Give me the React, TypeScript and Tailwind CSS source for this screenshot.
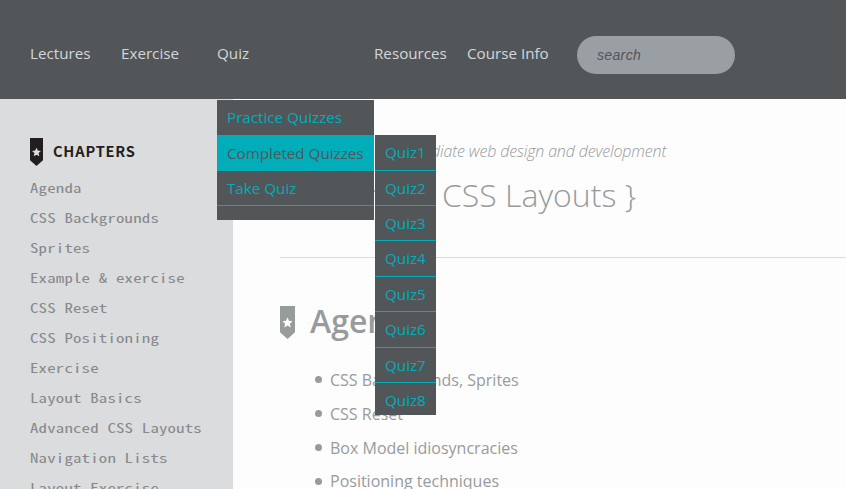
import React from "react";

const chapters = [
  "Agenda",
  "CSS Backgrounds",
  "Sprites",
  "Example & exercise",
  "CSS Reset",
  "CSS Positioning",
  "Exercise",
  "Layout Basics",
  "Advanced CSS Layouts",
  "Navigation Lists",
  "Layout Exercise",
];
const topics = ["CSS Backgrounds, Sprites", "CSS Reset", "Box Model idiosyncracies", "Positioning techniques"];
const quizzes = ["Quiz1", "Quiz2", "Quiz3", "Quiz4", "Quiz5", "Quiz6", "Quiz7", "Quiz8"];

function Ribbon({ className, star }: { className: string; star: string }) {
  return (
    <svg viewBox="0 0 15 32" preserveAspectRatio="none" className={className} aria-hidden="true">
      <path d="M0 0H15V25.5L7.5 32L0 25.5Z" fill="currentColor" />
      <path
        d="M7.5 11L9 14.4L12.6 14.8L9.9 17.2L10.7 20.8L7.5 19L4.3 20.8L5.1 17.2L2.4 14.8L6 14.4Z"
        fill={star}
      />
    </svg>
  );
}

function QuizMenu() {
  return (
    <div className="absolute top-[56px] left-0 z-10 w-[157px] bg-[#525659] text-[15.2px] leading-[35px] text-[#00adb9]">
      <div className="h-[35px] px-[10px]">Practice Quizzes</div>
      <div className="relative h-[36px] bg-[#00adb9] px-[10px] leading-[37px] text-[#525659]">
        <span className="whitespace-nowrap">Completed Quizzes</span>
        <ul className="absolute top-0 left-full ml-px h-[280px] w-[61px] bg-[#525659] text-[#00adb9]">
          {quizzes.map((quiz) => (
            <li
              key={quiz}
              className="h-[35.4px] border-b border-[#00adb9] pl-[10px] leading-[35.8px] first:h-[35.7px] first:leading-[35px] last:h-[32px] last:border-b-0 last:leading-[35px]"
            >
              {quiz}
            </li>
          ))}
        </ul>
      </div>
      <div className="h-[35px] border-b border-[#00adb9] px-[10px]">Take Quiz</div>
      <div className="h-[14px]" />
    </div>
  );
}

export default function App() {
  return (
    <div className="flex h-[489px] w-[846px] flex-col overflow-hidden bg-[#fdfdfd] font-['Open_Sans',sans-serif]">
      <header className="flex h-[99px] shrink-0 bg-[#525659] pt-[36px] pl-[30px]">
        <nav className="flex pt-[8px] text-[15.2px] leading-[18px] text-[#d3d6d9]">
          <a className="w-[91px]">Lectures</a>
          <a className="w-[96px]">Exercise</a>
          <div className="relative w-[157px]">
            Quiz
            <QuizMenu />
          </div>
          <a className="w-[93px]">Resources</a>
          <a className="w-[110px]">Course Info</a>
        </nav>
        <div className="h-[38px] w-[158px] rounded-[19px] bg-[#9a9fa4] pl-[20px] font-['Liberation_Sans',sans-serif] text-[14px] leading-[38px] tracking-[0.35px] text-[#525659] italic">
          search
        </div>
      </header>
      <div className="flex min-h-0 flex-1">
        <aside className="w-[233px] shrink-0 bg-[#dadcdd] pt-[39px] pl-[30px]">
          <div className="flex h-[35px]">
            <Ribbon className="h-[28px] w-[13px] text-[#231f20]" star="#dadcdd" />
            <h2 className="ml-[10px] font-['Noto_Sans_CJK_SC',sans-serif] text-[14.6px] leading-[25px] font-bold tracking-[0.8px] text-[#231f20]">
              CHAPTERS
            </h2>
          </div>
          <ul className="w-[160px] origin-left scale-x-[1.293] font-['Noto_Sans_Mono_CJK_SC','Liberation_Mono',monospace] text-[13px] leading-[30px] tracking-[0.15px] text-[#87898c]">
            {chapters.map((chapter) => (
              <li key={chapter} className="h-[30px] whitespace-nowrap">
                {chapter}
              </li>
            ))}
          </ul>
        </aside>
        <main className="flex-1 pt-[39px] pl-[47px] text-[#979b9c]">
          <p className="h-[27px] text-[16px] leading-[27px] font-light tracking-[-0.15px] whitespace-nowrap italic">
            <span className="tracking-[0.6px]">Beginning to </span>
            Intermediate web design and development
          </p>
          <h1 className="h-[60px] text-[32px] leading-[60px] font-light whitespace-nowrap">
            <span className="tracking-[-0.6px]">{"{ Advanced "}</span>
            {"CSS Layouts }"}
          </h1>
          <hr className="mt-[32px] border-[#d9dbdc]" />
          <div className="mt-[48px] flex h-[57px]">
            <Ribbon className="h-[33px] w-[15px] text-[#979b9c]" star="#fdfdfd" />
            <h2 className="ml-[15px] text-[32px] leading-[30px] font-semibold">Agenda</h2>
          </div>
          <ul className="text-[16px] leading-[34px]">
            {topics.map((topic) => (
              <li key={topic} className="flex h-[33.8px] items-center pl-[35px] whitespace-nowrap">
                <i className="mr-[8px] size-[7px] rounded-full bg-[#979b9c]" />
                {topic}
              </li>
            ))}
          </ul>
        </main>
      </div>
    </div>
  );
}
